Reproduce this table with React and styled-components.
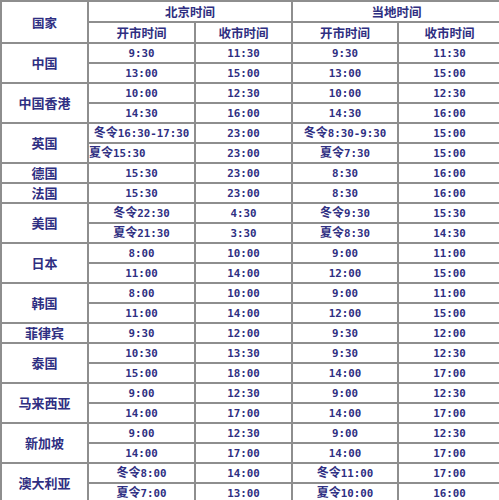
import React from 'react';
import styled, { createGlobalStyle } from 'styled-components';

const GlobalStyle = createGlobalStyle`
  html, body {
    margin: 0;
    padding: 0;
    background: #ffffff;
  }
`;

const markets = [
  { country: '中国', rows: [['9:30', '11:30', '9:30', '11:30'], ['13:00', '15:00', '13:00', '15:00']] },
  { country: '中国香港', rows: [['10:00', '12:30', '10:00', '12:30'], ['14:30', '16:00', '14:30', '16:00']] },
  { country: '英国', rows: [['冬令16:30-17:30', '23:00', '冬令8:30-9:30', '15:00'], ['夏令15:30', '23:00', '夏令7:30', '15:00']], leftFirst: [1] },
  { country: '德国', rows: [['15:30', '23:00', '8:30', '16:00']] },
  { country: '法国', rows: [['15:30', '23:00', '8:30', '16:00']] },
  { country: '美国', rows: [['冬令22:30', '4:30', '冬令9:30', '15:30'], ['夏令21:30', '3:30', '夏令8:30', '14:30']] },
  { country: '日本', rows: [['8:00', '10:00', '9:00', '11:00'], ['11:00', '14:00', '12:00', '15:00']] },
  { country: '韩国', rows: [['8:00', '10:00', '9:00', '11:00'], ['11:00', '14:00', '12:00', '15:00']] },
  { country: '菲律宾', rows: [['9:30', '12:00', '9:30', '12:00']] },
  { country: '泰国', rows: [['10:30', '13:30', '9:30', '12:30'], ['15:00', '18:00', '14:00', '17:00']] },
  { country: '马来西亚', rows: [['9:00', '12:30', '9:00', '12:30'], ['14:00', '17:00', '14:00', '17:00']] },
  { country: '新加坡', rows: [['9:00', '12:30', '9:00', '12:30'], ['14:00', '17:00', '14:00', '17:00']] },
  { country: '澳大利亚', rows: [['冬令8:00', '14:00', '冬令11:00', '17:00'], ['夏令7:00', '13:00', '夏令10:00', '16:00']] },
];

const Table = styled.table`
  width: 500px;
  table-layout: fixed;
  border-collapse: collapse;
  border: 2px solid #7e7e7e;
  color: #2f2f82;
  font-family: "Noto Sans CJK SC", "DejaVu Sans", sans-serif;
  font-weight: 700;
`;

const HeadCell = styled.th`
  height: 19px;
  padding: 0;
  border: 2px solid #8e8e8e;
  font-size: 12.5px;
  font-weight: 700;
  line-height: 17px;
  text-align: center;
  vertical-align: middle;
`;

const CountryCell = styled.td`
  padding: 0;
  border: 2px solid #8e8e8e;
  font-size: 13px;
  line-height: 16px;
  text-align: center;
  vertical-align: middle;
`;

const TimeCell = styled.td`
  height: 18px;
  padding: 0;
  border: 2px solid #8e8e8e;
  font-size: 12px;
  line-height: 16px;
  white-space: nowrap;
  text-align: ${p => (p.$left ? 'left' : 'center')};
  vertical-align: middle;
`;

const Season = styled.span`
  font-family: "Noto Sans CJK SC", sans-serif;
  font-size: 12px;
`;

const Num = styled.span`
  font-family: "DejaVu Sans Mono", "Liberation Mono", monospace;
  font-size: 10.8px;
`;

function Time({ value }) {
  const m = value.match(/^(冬令|夏令)?(.*)$/);
  return (
    <>
      {m[1] && <Season>{m[1]}</Season>}
      <Num>{m[2]}</Num>
    </>
  );
}

export default function App() {
  return (
    <>
      <GlobalStyle />
      <Table>
        <colgroup>
          <col style={{ width: 87 }} />
          <col style={{ width: 107 }} />
          <col style={{ width: 97 }} />
          <col style={{ width: 106 }} />
          <col style={{ width: 103 }} />
        </colgroup>
        <thead>
          <tr>
            <HeadCell rowSpan={2}>国家</HeadCell>
            <HeadCell colSpan={2}>北京时间</HeadCell>
            <HeadCell colSpan={2}>当地时间</HeadCell>
          </tr>
          <tr>
            <HeadCell>开市时间</HeadCell>
            <HeadCell>收市时间</HeadCell>
            <HeadCell>开市时间</HeadCell>
            <HeadCell>收市时间</HeadCell>
          </tr>
        </thead>
        <tbody>
          {markets.map(market =>
            market.rows.map((row, i) => (
              <tr key={market.country + i}>
                {i === 0 && (
                  <CountryCell rowSpan={market.rows.length}>{market.country}</CountryCell>
                )}
                {row.map((value, j) => (
                  <TimeCell key={j} $left={j === 0 && (market.leftFirst || []).includes(i)}>
                    <Time value={value} />
                  </TimeCell>
                ))}
              </tr>
            ))
          )}
        </tbody>
      </Table>
    </>
  );
}
